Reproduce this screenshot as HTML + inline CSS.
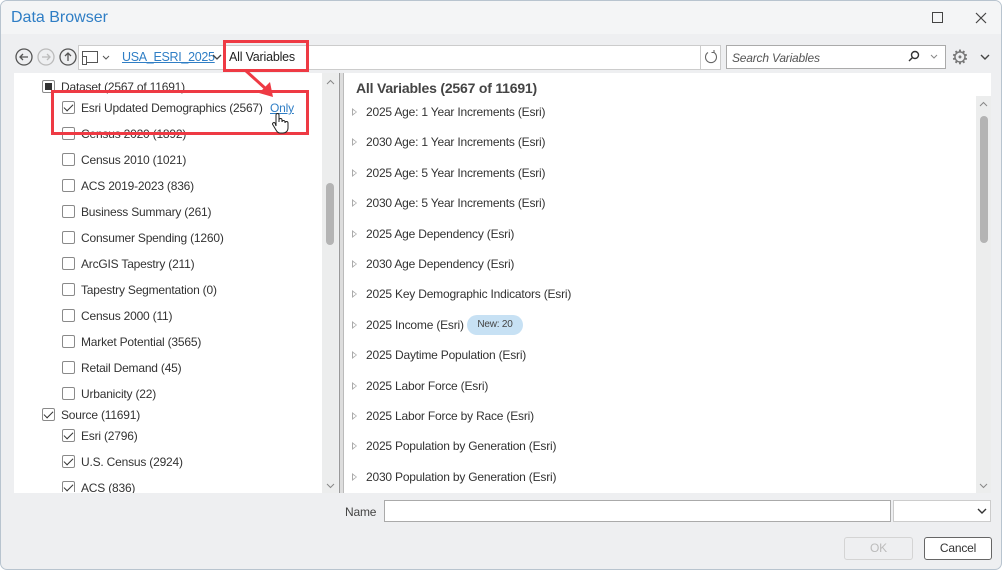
<!DOCTYPE html>
<html><head><style>
*{box-sizing:border-box;margin:0;padding:0}
body{width:1002px;height:570px;background:#fff;font-family:"Liberation Sans",sans-serif;font-size:12px;letter-spacing:-0.2px;color:#333;position:relative;overflow:hidden}
.win{position:absolute;left:0;top:0;width:1002px;height:570px;background:#eeeff1;border:1px solid #b8c4cf;border-radius:7px;overflow:hidden}
.title{position:absolute;left:0;top:0;width:1000px;height:33px;background:#f4f5f6}
.a{position:absolute;white-space:nowrap}
.cb{position:absolute;width:13px;height:13px;border:1px solid #8a8a8a;border-radius:2px;background:#fff}
.cb.c::after{content:"";position:absolute;left:3px;top:0px;width:4px;height:8px;border:solid #333;border-width:0 1.6px 1.6px 0;transform:rotate(45deg)}
.tri{position:absolute;width:0;height:0;border-left:5px solid #aaa;border-top:4px solid transparent;border-bottom:4px solid transparent}
.tri::after{content:"";position:absolute;left:-4px;top:-2px;border-left:3px solid #fff;border-top:2px solid transparent;border-bottom:2px solid transparent}
.red{position:absolute;border:3px solid #ee3a44}
</style></head><body>
<div class="win">
<div class="title"></div>
<div class="a" style="left:10px;top:8px;font-size:16px;color:#2f7ec5;letter-spacing:0">Data Browser</div>
<div class="a" style="left:931px;top:11px;width:11px;height:11px;border:1px solid #444"></div>
<svg class="a" style="left:974px;top:11px" width="12" height="12"><path d="M1 1L11 11M11 1L1 11" stroke="#444" stroke-width="1.2"/></svg>

<!-- toolbar -->
<svg class="a" style="left:14px;top:46px" width="64" height="20">
<g fill="none" stroke-width="1.3"><circle cx="9" cy="10" r="8" stroke="#555"/><path d="M13 10H5M8 7L5 10L8 13" stroke="#555"/>
<circle cx="31" cy="10" r="8" stroke="#bbb"/><path d="M27 10H35M32 7L35 10L32 13" stroke="#bbb"/>
<circle cx="53" cy="10" r="8" stroke="#555"/><path d="M53 14V6M50 9L53 6L56 9" stroke="#555"/></g></svg>
<div class="a" style="left:77px;top:44px;width:623px;height:25px;background:#fff;border:1px solid #ccc"></div>
<svg class="a" style="left:80px;top:48px" width="34" height="18"><g fill="none" stroke="#555"><rect x="1.5" y="2.5" width="15" height="11"/><rect x="1.5" y="7.5" width="4" height="8" fill="#fff"/><path d="M22 7l3 3 3-3"/></g></svg>
<div class="a" style="left:121px;top:49px;color:#2f7ec5;text-decoration:underline;font-size:12.5px;letter-spacing:-0.3px">USA_ESRI_2025</div>
<svg class="a" style="left:211px;top:52px" width="10" height="8"><path d="M1 2l4 4 4-4" fill="none" stroke="#444" stroke-width="1.3"/></svg>
<div class="a" style="left:228px;top:49px;font-size:12.5px;color:#222">All Variables</div>
<div class="a" style="left:699px;top:44px;width:21px;height:25px;background:#fff;border:1px solid #ccc"></div>
<svg class="a" style="left:702px;top:48px" width="16" height="16"><path d="M11 3.5A5.5 5.5 0 1 1 5 3.5M11 3.5V1M11 3.5H8.5" fill="none" stroke="#666" stroke-width="1.1"/></svg>
<div class="a" style="left:725px;top:44px;width:220px;height:24px;background:#fff;border:1px solid #aaa"></div>
<div class="a" style="left:731px;top:50px;font-style:italic;color:#555">Search Variables</div>
<svg class="a" style="left:905px;top:49px" width="40" height="14"><g fill="none" stroke="#333" stroke-width="1.4"><circle cx="9" cy="5" r="3.5"/><path d="M6.5 7.5L3 11"/></g><path d="M25 5l3 3 3-3" fill="none" stroke="#888"/></svg>
<div class="a" style="left:950px;top:44px;font-size:20px;color:#777">⚙</div>
<svg class="a" style="left:979px;top:52px" width="10" height="8"><path d="M1 2l4 4 4-4" fill="none" stroke="#444" stroke-width="1.4"/></svg>

<!-- left pane -->
<div class="a" style="left:13px;top:72px;width:324px;height:420px;background:#fff"></div>
<div class="a" style="left:321px;top:72px;width:16px;height:420px;background:#eceded"></div>
<div class="a" style="left:325px;top:182px;width:8px;height:62px;background:#b4b4b4;border-radius:4px"></div>
<svg class="a" style="left:325px;top:78px" width="9" height="6"><path d="M1 5l3.5-3.5L8 5" fill="none" stroke="#888"/></svg>
<svg class="a" style="left:325px;top:482px" width="9" height="6"><path d="M1 1l3.5 3.5L8 1" fill="none" stroke="#888"/></svg>
<div class="a" style="left:338px;top:72px;width:5px;height:420px;border-left:1px solid #999;border-right:1px solid #bbb;background:#ddd"></div>

<div class="cb" style="left:41px;top:79px"><div style="position:absolute;left:2px;top:2px;width:7px;height:7px;background:#333"></div></div>
<div class="a" style="left:60px;top:79px">Dataset (2567 of 11691)</div>
<div class="cb c" style="left:61px;top:100px"></div><div class="a" style="left:80px;top:100px">Esri Updated Demographics (2567)</div>
<div class="a" style="left:269px;top:100px;color:#2f7ec5;text-decoration:underline">Only</div>
<div class="cb" style="left:61px;top:126px"></div><div class="a" style="left:80px;top:126px">Census 2020 (1892)</div>
<div class="cb" style="left:61px;top:152px"></div><div class="a" style="left:80px;top:152px">Census 2010 (1021)</div>
<div class="cb" style="left:61px;top:178px"></div><div class="a" style="left:80px;top:178px">ACS 2019-2023 (836)</div>
<div class="cb" style="left:61px;top:204px"></div><div class="a" style="left:80px;top:204px">Business Summary (261)</div>
<div class="cb" style="left:61px;top:230px"></div><div class="a" style="left:80px;top:230px">Consumer Spending (1260)</div>
<div class="cb" style="left:61px;top:256px"></div><div class="a" style="left:80px;top:256px">ArcGIS Tapestry (211)</div>
<div class="cb" style="left:61px;top:282px"></div><div class="a" style="left:80px;top:282px">Tapestry Segmentation (0)</div>
<div class="cb" style="left:61px;top:308px"></div><div class="a" style="left:80px;top:308px">Census 2000 (11)</div>
<div class="cb" style="left:61px;top:334px"></div><div class="a" style="left:80px;top:334px">Market Potential (3565)</div>
<div class="cb" style="left:61px;top:360px"></div><div class="a" style="left:80px;top:360px">Retail Demand (45)</div>
<div class="cb" style="left:61px;top:386px"></div><div class="a" style="left:80px;top:386px">Urbanicity (22)</div>
<div class="cb c" style="left:41px;top:407px"></div><div class="a" style="left:60px;top:407px">Source (11691)</div>
<div class="cb c" style="left:61px;top:428px"></div><div class="a" style="left:80px;top:428px">Esri (2796)</div>
<div class="cb c" style="left:61px;top:454px"></div><div class="a" style="left:80px;top:454px">U.S. Census (2924)</div>
<div class="cb c" style="left:61px;top:480px;clip-path:inset(0 0 2px 0)"></div><div class="a" style="left:80px;top:480px;height:12px;overflow:hidden;line-height:14px">ACS (836)</div>

<!-- right pane -->
<div class="a" style="left:343px;top:72px;width:647px;height:420px;background:#fff"></div>
<div class="a" style="left:975px;top:95px;width:15px;height:397px;background:#eceded"></div>
<div class="a" style="left:979px;top:115px;width:8px;height:127px;background:#b4b4b4;border-radius:4px"></div>
<svg class="a" style="left:978px;top:100px" width="9" height="6"><path d="M1 5l3.5-3.5L8 5" fill="none" stroke="#888"/></svg>
<svg class="a" style="left:978px;top:482px" width="9" height="6"><path d="M1 1l3.5 3.5L8 1" fill="none" stroke="#888"/></svg>
<div class="a" style="left:355px;top:79px;font-size:14px;font-weight:bold;color:#444">All Variables (2567 of 11691)</div>
<div id="r"></div>
<div class="a" style="left:466px;top:314px;width:56px;height:20px;background:#c7e1f4;border-radius:10px;font-size:10px;color:#444;text-align:center;line-height:20px">New: 20</div>

<!-- bottom -->
<div class="a" style="left:344px;top:504px;color:#444">Name</div>
<div class="a" style="left:383px;top:499px;width:507px;height:22px;background:#fff;border:1px solid #aaa"></div>
<div class="a" style="left:892px;top:499px;width:98px;height:22px;background:#fff;border:1px solid #ccc"></div>
<svg class="a" style="left:976px;top:506px" width="10" height="8"><path d="M1 2l4 4 4-4" fill="none" stroke="#333" stroke-width="1.4"/></svg>
<div class="a" style="left:843px;top:536px;width:69px;height:23px;border:1px solid #d4d4d4;border-radius:3px;color:#bbb;text-align:center;line-height:21px">OK</div>
<div class="a" style="left:923px;top:536px;width:68px;height:23px;border:1px solid #666;border-radius:3px;background:#fff;color:#333;text-align:center;line-height:21px">Cancel</div>

<!-- annotations -->
<div class="red" style="left:222px;top:39px;width:86px;height:32px"></div>
<div class="red" style="left:50px;top:89px;width:258px;height:45px"></div>
<svg class="a" style="left:240px;top:66px" width="40" height="36"><path d="M4 3L25 22" stroke="#ee3a44" stroke-width="3"/><path d="M18 26L32 30L29 15Z" fill="#ee3a44"/></svg>
<svg class="a" style="left:270px;top:111px" width="18" height="22"><path d="M5 14V3a1.5 1.5 0 0 1 3 0v7V8a1.5 1.5 0 0 1 3 0v2a1.5 1.5 0 0 1 3 0v1a1.5 1.5 0 0 1 3 0v5c0 3-2 5-5 5H9c-2 0-3-1-4-3L2 13a1.4 1.4 0 0 1 2-2z" fill="#fff" stroke="#222" stroke-width="1"/></svg>
</div>
<script>
var t=["2025 Age: 1 Year Increments (Esri)","2030 Age: 1 Year Increments (Esri)","2025 Age: 5 Year Increments (Esri)","2030 Age: 5 Year Increments (Esri)","2025 Age Dependency (Esri)","2030 Age Dependency (Esri)","2025 Key Demographic Indicators (Esri)","2025 Income (Esri)","2025 Daytime Population (Esri)","2025 Labor Force (Esri)","2025 Labor Force by Race (Esri)","2025 Population by Generation (Esri)","2030 Population by Generation (Esri)"];
var h="";t.forEach(function(s,i){var y=104+i*30.4;h+='<div class="tri" style="left:351px;top:'+(y+3)+'px"></div><div class="a" style="left:365px;top:'+y+'px">'+s+'</div>';});
document.getElementById("r").outerHTML=h;
</script>
</body></html>
